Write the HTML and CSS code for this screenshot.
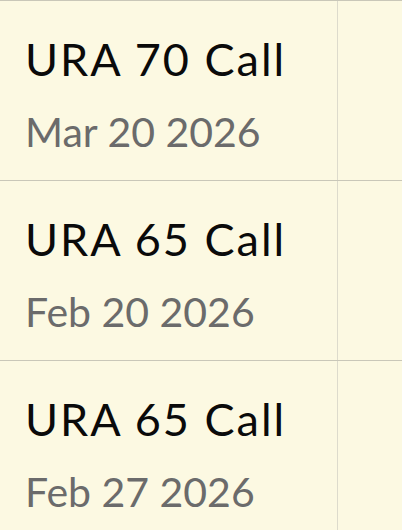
FILE: index.html
```html
<!DOCTYPE html>
<html lang="en">
<head>
    <meta charset="UTF-8">
    <meta name="viewport" content="width=device-width, initial-scale=1.0">
    <title>Options</title>
    <link rel="stylesheet" href="styles.css">
</head>
<body>
    <div class="list">
        <div class="row">
            <div class="cell">
                <div class="title">URA 70 Call</div>
                <div class="date">Mar 20 2026</div>
            </div>
            <div class="side"></div>
        </div>
        <div class="row">
            <div class="cell">
                <div class="title">URA 65 Call</div>
                <div class="date">Feb 20 2026</div>
            </div>
            <div class="side"></div>
        </div>
        <div class="row">
            <div class="cell">
                <div class="title">URA 65 Call</div>
                <div class="date">Feb 27 2026</div>
            </div>
            <div class="side"></div>
        </div>
    </div>
</body>
</html>
```

FILE: styles.css
```css
body {
    margin: 0;
    padding: 0;
    background-color: #fcf9e2;
    font-family: 'Lato', sans-serif;
}

.list {
    border-top: 1px solid #c9c7b8;
}

.row {
    display: flex;
    height: 179px;
    border-bottom: 1px solid #c9c7b8;
}

.cell {
    width: 338px;
    border-right: 1px solid #dddbcc;
    padding: 31px 0 0 25px;
    box-sizing: border-box;
}

.side {
    flex: 1;
}

.title {
    font-size: 45px;
    line-height: 54px;
    letter-spacing: 2px;
    color: #0a0a0a;
}

.date {
    font-size: 41px;
    line-height: 50px;
    margin-top: 21px;
    color: #6b6b6b;
}
```
